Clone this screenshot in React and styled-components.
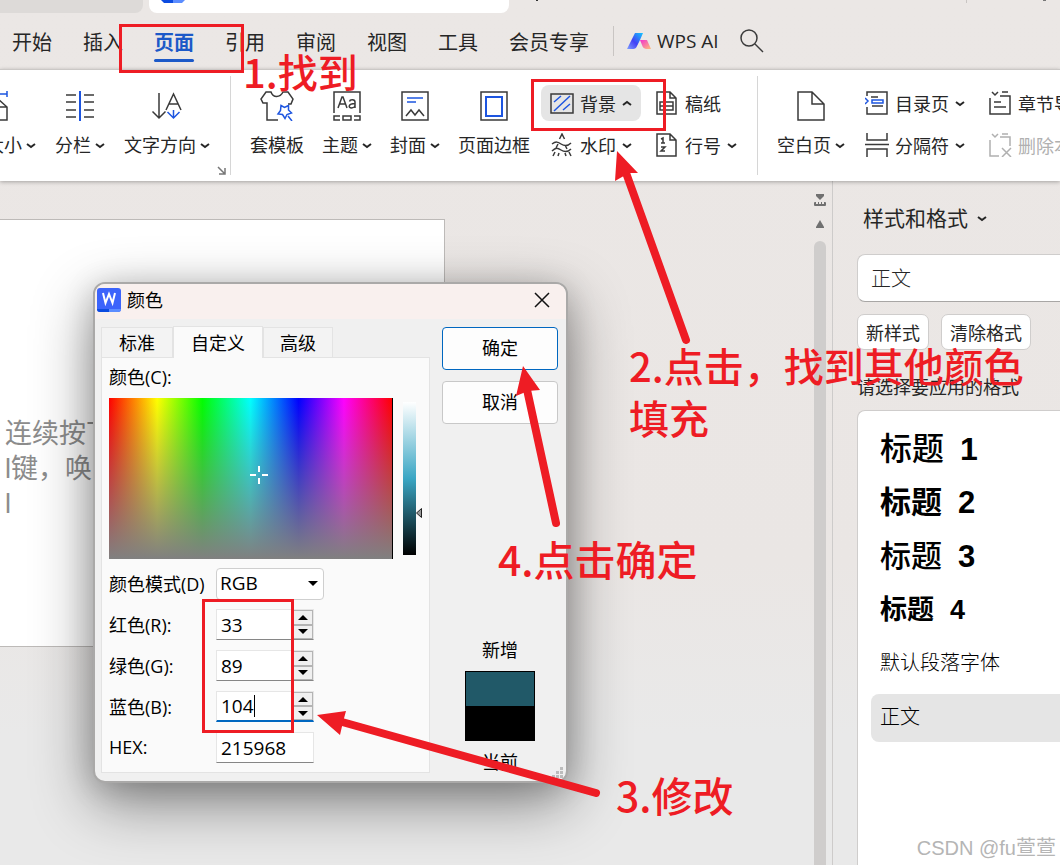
import React, { useState } from "react";
import styled, { createGlobalStyle, css } from "styled-components";

const ui = '"Open Sans", "Noto Sans CJK SC", sans-serif';
const red = "#ee1c24";
const ink = "#262626";
const blue = "#1d55e0";

const Global = createGlobalStyle`
  * { box-sizing: border-box; }
  body { margin: 0; font-family: ${ui}; color: ${ink}; }
  button, input, select { font: inherit; color: inherit; margin: 0; }
  h1, h2, p, ul { margin: 0; padding: 0; font-weight: inherit; }
`;

const AppWindow = styled.div`
  position: relative;
  display: flex;
  flex-direction: column;
  min-height: 100vh;
  overflow: hidden;
  background: linear-gradient(180deg, #ebe7e5 0%, #eae6e4 65%, #e9e9e9 85%);
`;

/* window tabs */
const TabStrip = styled.div`
  display: flex;
  gap: 6px;
  height: 13px;
  > svg { margin-left: 20px; }
  > svg:last-child { margin-left: auto; }
`;
const WindowTab = styled.div`
  width: ${(p) => p.$width}px;
  padding-left: 12px;
  background: ${(p) => (p.$active ? "#fff" : "#dddad8")};
  border-radius: ${(p) => (p.$active ? "0 0 8px 8px" : "0 0 8px 0")};
  svg { display: block; }
`;

/* menu bar */
const MenuBar = styled.nav`
  display: flex;
  align-items: center;
  height: 56px;
  padding-left: 12px;
  font-size: 20px;
  white-space: nowrap;
`;
const MenuItem = styled.button`
  position: relative;
  height: 56px;
  padding: 3px 0 0;
  margin-right: 31px;
  border: 0;
  background: none;
  line-height: 53px;
  ${(p) => p.$active && css`
    color: #1c59c8;
    font-weight: 700;
    &::after {
      content: "";
      position: absolute;
      left: 0;
      right: 0;
      bottom: 7px;
      height: 3px;
      border-radius: 2px;
      background: #1c59c8;
    }
  `}
  &:last-child { margin-right: 24px; }
`;
const MenuGroup = styled.div`
  display: flex;
`;
const MenuRule = styled.div`
  width: 1px;
  height: 30px;
  background: #c9c5c3;
`;
const AiButton = styled.button`
  display: flex;
  align-items: center;
  gap: 6px;
  padding: 0;
  margin: 0 21px 0 13px;
  border: 0;
  background: none;
  font-size: 19px;
`;
const IconButton = styled.button`
  display: flex;
  padding: 0;
  border: 0;
  background: none;
`;

/* ribbon */
const Ribbon = styled.div`
  position: relative;
  z-index: 1;
  display: flex;
  height: 112px;
  background: #fff;
  border-top: 1px solid #cbc8c6;
  box-shadow: 0 1px 4px rgba(0, 0, 0, 0.3);
  font-size: 18px;
  white-space: nowrap;
`;
const RibbonGroup = styled.div`
  position: relative;
  display: flex;
  flex: none;
  gap: 18px;
  padding: 0 19px;
  ${(p) => p.$first && css`
    width: 230px;
    padding: 0 20px 0 0;
    gap: 19px;
    justify-content: flex-end;
  `}
  ${(p) => p.$wide && css`
    padding-right: 11px;
  `}
`;
const GroupRule = styled.div`
  flex: none;
  width: 1px;
  height: 99px;
  margin-top: 6px;
  background: #d6d6d6;
`;
const BigButton = styled.button`
  display: flex;
  flex: none;
  flex-direction: column;
  align-items: center;
  gap: 12px;
  padding: 21px 0 0;
  border: 0;
  background: none;
`;
const BigLabel = styled.span`
  display: flex;
  align-items: center;
  gap: 4px;
  line-height: 24px;
`;
const SmallColumns = styled.div`
  display: flex;
  gap: 5px;
  margin-left: -7px;
`;
const SmallColumn = styled.div`
  display: flex;
  flex-direction: column;
  align-items: flex-start;
  gap: 6px;
  padding-top: 15px;
`;
const SmallButton = styled.button`
  display: flex;
  align-items: center;
  gap: 6px;
  height: 36px;
  padding: 0 9px;
  border: 0;
  border-radius: 8px;
  background: ${(p) => (p.$active ? "#e5e5e5" : "none")};
  color: ${(p) => (p.disabled ? "#b0b0b0" : "inherit")};
`;
const Launcher = styled.button`
  position: absolute;
  right: 4px;
  bottom: 6px;
  display: flex;
  padding: 0;
  border: 0;
  background: none;
`;

/* work area */
const Workspace = styled.main`
  display: flex;
  flex: 1;
`;
const Canvas = styled.section`
  flex: 1;
  min-width: 0;
  padding-top: 38px;
`;
const Paper = styled.article`
  width: 445px;
  height: 428px;
  padding: 197px 0 0 5px;
  background: #fff;
  border: 1px solid #bdbab8;
  border-left: 0;
  color: #8c8c8c;
  font-family: "Liberation Sans", "Noto Sans CJK SC", sans-serif;
  font-size: 27px;
  line-height: 35px;
`;
const ScrollColumn = styled.div`
  display: flex;
  flex-direction: column;
  align-items: center;
  gap: 13px;
  width: 24px;
  padding-top: 13px;
`;
const ScrollThumb = styled.div`
  flex: 1;
  width: 12px;
  border-radius: 6px 6px 0 0;
  background: #cfcdcc;
`;
const SidePanel = styled.aside`
  display: flex;
  flex-direction: column;
  width: 228px;
  padding: 22px 0 0 24px;
  border-left: 1px solid #cdcbca;
  white-space: nowrap;
`;
const PanelTitle = styled.h2`
  display: flex;
  align-items: center;
  gap: 9px;
  padding-left: 6px;
  font-size: 21px;
  line-height: 30px;
`;
const StyleInput = styled.input`
  width: 100%;
  height: 48px;
  margin: 21px 0 12px;
  padding: 0 13px 2px;
  border: 1px solid #cfcdcc;
  border-right: 0;
  border-bottom-color: #a8a6a5;
  border-radius: 8px 0 0 8px;
  background: #fff;
  font-size: 20px;
  font-weight: 300;
`;
const StyleActions = styled.div`
  display: flex;
  gap: 12px;
`;
const StyleAction = styled.button`
  height: 36px;
  padding: 0 8px;
  border: 1px solid #cfcdcc;
  border-radius: 7px;
  background: #fff;
  font-size: 18px;
`;
const Hint = styled.p`
  margin: 25px 0 10px;
  font-size: 18px;
  line-height: 25px;
`;
const StyleList = styled.ul`
  display: flex;
  flex: 1;
  flex-direction: column;
  gap: 6px;
  padding: 13px 0 0 13px;
  border: 1px solid #cfcdcc;
  border-width: 1px 0 0 1px;
  border-radius: 8px 0 0 0;
  background: #fff;
  color: #000;
  list-style: none;
`;
const StyleRow = styled.li`
  height: 48px;
  padding-left: 9px;
  border-radius: 8px 0 0 8px;
  background: ${(p) => (p.$selected ? "#e5e5e5" : "none")};
  font-family: "Noto Sans CJK SC", sans-serif;
  font-size: ${(p) => p.$size}px;
  font-weight: ${(p) => p.$weight};
  line-height: 44px;
  b {
    margin-left: 16px;
    font-family: "Liberation Sans", sans-serif;
    font-weight: 700;
    line-height: 1;
  }
`;

/* colour dialog */
const Dialog = styled.section`
  position: absolute;
  z-index: 2;
  left: 93px;
  top: 282px;
  width: 475px;
  height: 501px;
  border: 2px solid #aaa9a8;
  border-radius: 12px;
  background: #f0f0f0;
  box-shadow: 0 20px 60px rgba(0, 0, 0, 0.44), 0 4px 30px rgba(0, 0, 0, 0.16);
  color: #000;
  font-size: 18px;
`;
const DialogTitle = styled.header`
  display: flex;
  align-items: center;
  gap: 6px;
  height: 35px;
  padding: 0 16px 3px 2px;
  border-radius: 10px 10px 0 0;
  background: #f9f0ee;
  h1 { flex: 1; font-size: 18px; line-height: 24px; }
`;
const DialogBody = styled.div`
  display: flex;
  justify-content: space-between;
  padding: 7px 8px 0 6px;
`;
const Tabs = styled.div`
  display: flex;
  align-items: flex-end;
  height: 32px;
`;
const Tab = styled.button`
  position: relative;
  z-index: ${(p) => (p.$active ? 1 : 0)};
  width: ${(p) => p.$width}px;
  height: ${(p) => (p.$active ? 32 : 31)}px;
  padding: 0 0 2px;
  border: 1px solid #e3e3e3;
  border-bottom: ${(p) => (p.$active ? "0" : "1px solid #e3e3e3")};
  background: ${(p) => (p.$active ? "#fafafa" : "#f3f3f3")};
`;
const TabPanel = styled.div`
  width: 329px;
  height: 416px;
  margin-top: -1px;
  padding: 7px 7px 0;
  border: 1px solid #e3e3e3;
  background: #fafafa;
`;
const Caption = styled.div`
  line-height: 24px;
`;
const Picker = styled.div`
  display: flex;
  gap: 10px;
  height: 161px;
  margin-top: 9px;
`;
const Spectrum = styled.div`
  position: relative;
  width: 284px;
  border-right: 1px solid #000;
  background:
    linear-gradient(180deg, rgba(128, 128, 128, 0), #808080),
    linear-gradient(90deg, #f00, #ff0 17%, #0f0 33%, #0ff 50%, #00f 67%, #f0f 83%, #f00);
  svg { position: absolute; left: 141px; top: 68px; }
`;
const Luminance = styled.div`
  position: relative;
  width: 13px;
  height: 153px;
  margin-top: 4px;
  background: linear-gradient(180deg, #fff, #3aa6c4 50%, #000);
  input {
    position: absolute;
    inset: 0;
    width: 13px;
    height: 153px;
    writing-mode: vertical-lr;
    opacity: 0;
  }
  svg { position: absolute; left: 13px; top: 106px; }
`;
const Fields = styled.div`
  display: flex;
  flex-direction: column;
  gap: 10px;
  margin-top: 9px;
`;
const Field = styled.div`
  display: flex;
  align-items: center;
  height: 31px;
  label { width: 107px; padding-bottom: 2px; white-space: nowrap; }
`;
const SelectBox = styled.div`
  position: relative;
  svg { position: absolute; right: 6px; top: 13px; pointer-events: none; }
`;
const Select = styled.select`
  display: block;
  width: 108px;
  height: 32px;
  padding: 0 3px 1px;
  border: 1px solid #cfcfcf;
  border-radius: 4px;
  background: #fff;
  font-size: 19px;
  appearance: none;
`;
const ValueBox = styled.div`
  position: relative;
  display: flex;
  width: 98px;
  height: 31px;
  background: #fff;
  border: 1px solid #e6e6e6;
  border-bottom: ${(p) => (p.$focus ? "2px solid #0067c0" : "1px solid #868686")};
  input {
    flex: 1;
    min-width: 0;
    padding: 0 4px;
    border: 0;
    background: none;
    outline: none;
    font-size: 19px;
  }
`;
const Caret = styled.span`
  position: absolute;
  left: 37px;
  top: 3px;
  width: 1px;
  height: 22px;
  background: #000;
`;
const Spinner = styled.div`
  display: flex;
  flex-direction: column;
  width: 20px;
`;
const SpinButton = styled.button`
  display: flex;
  flex: 1;
  align-items: center;
  justify-content: center;
  padding: 0;
  border: 1px solid #b4b4b4;
  background: #f0f0f0;
`;
const DialogSide = styled.div`
  display: flex;
  flex-direction: column;
  align-items: center;
  width: 116px;
  padding-top: 1px;
`;
const DialogButton = styled.button`
  width: 116px;
  height: 43px;
  margin-bottom: 11px;
  padding: 0 0 3px;
  border: 1px solid ${(p) => (p.$primary ? "#0067c0" : "#c8c8c8")};
  border-radius: 4px;
  background: #fdfdfd;
`;
const Preview = styled.div`
  display: flex;
  flex-direction: column;
  align-items: center;
  gap: 9px;
  margin-top: 203px;
  line-height: 24px;
`;
const Swatch = styled.div`
  width: 70px;
  height: 70px;
  border: 1px solid #000;
  background: linear-gradient(#215968 50%, #000 50%);
`;
const Grip = styled.svg`
  position: absolute;
  right: 2px;
  bottom: 2px;
`;

/* tutorial marks drawn over the window */
const Marks = styled.div`
  position: absolute;
  z-index: 3;
  inset: 0;
  overflow: hidden;
  pointer-events: none;
  svg { position: absolute; left: 0; top: 0; }
`;
const Frame = styled.div`
  position: absolute;
  left: ${(p) => p.$x}px;
  top: ${(p) => p.$y}px;
  width: ${(p) => p.$w}px;
  height: ${(p) => p.$h}px;
  border: 3px solid ${red};
`;
const Note = styled.p`
  position: absolute;
  left: ${(p) => p.$x}px;
  top: ${(p) => p.$y}px;
  color: ${red};
  font-family: "Noto Sans CJK SC", sans-serif;
  font-size: ${(p) => p.$size || 41}px;
  font-weight: 500;
  line-height: 52px;
  white-space: nowrap;
`;
const Watermark = styled.p`
  position: absolute;
  right: 4px;
  bottom: 3px;
  color: #b5b5b5;
  font-family: "Liberation Sans", "Noto Sans CJK SC", sans-serif;
  font-size: 20px;
  line-height: 28px;
  text-shadow: 1px 1px 0 #fff;
`;

const Chevron = ({ up }) => (
  <svg width="10" height="10" viewBox="0 0 10 10" fill="none" stroke="#262626" strokeWidth="2">
    <path d={up ? "M1 7 5 4 9 7" : "M1 4 5 7 9 4"} />
  </svg>
);
const Triangle = ({ up }) => (
  <svg width="10" height="5" viewBox="0 0 10 5"><path d={up ? "M0 5 5 0l5 5z" : "M0 0h10L5 5z"} /></svg>
);
const Glyph = ({ w = 30, h = 30, dim, children }) => (
  <svg width={w} height={h} viewBox={`0 0 ${w} ${h}`} fill="none" stroke={dim ? "#b0b0b0" : "#3a3a3a"} strokeWidth="1.500">
    {children}
  </svg>
);

const icons = {
  size: (
    <Glyph><path d="M3 29V8h17l9 8v13z M20 8v8h9" /><path stroke={blue} d="M3 3h26M3 0v6M29 0v6" /></Glyph>
  ),
  columns: (
    <Glyph><path d="M1 4h10M1 11h10M1 19h10M1 26h10M19 4h10M19 11h10M19 19h10M19 26h10" /><path stroke={blue} strokeWidth="2" d="M15 0v30" /></Glyph>
  ),
  direction: (
    <Glyph w={32}><path d="M8 2v25M1.500 20.500 8 27l6.500-6.500M15 19 22.500 3 30 19M18 13h9" /><path stroke={blue} d="M22.500 19v8M16.500 21l6 6 6-6" /></Glyph>
  ),
  shirt: (
    <Glyph w={34}><path d="M18 29H7V12H3L1 8l5-7h5c2 6 9 6 12 0h5l5 7-2 5h-3" /><path stroke={blue} d="m21 14.500 3.500 2 4-2 0 4.500 3 3-4.500 1.500-2 4-2.500-4-4.500-.5 2.500-3.500zM28 25l4 5" /></Glyph>
  ),
  theme: (
    <Glyph><path d="M2 22V1h26v21M8 25H2v4h6M11 25h8v4h-8zM22 25h6v4h-6" /><path d="M6 17 10 6h1l4 11M7.500 13h6M23 17v-6c0-3-5-3-5.500-.5M23 12.500c-7 0-7 4.500-3.500 4.500 2 0 3.500-1.500 3.500-3" /></Glyph>
  ),
  cover: (
    <Glyph><path d="M2 1h26v28H2zM6 25l5-6 4 5 4-5 5 6" /><path stroke={blue} d="M7 7h16M7 11h9" /></Glyph>
  ),
  border: (
    <Glyph><path d="M2 1h26v28H2z" /><path stroke={blue} strokeWidth="2" d="M7 6h16v19H7z" /></Glyph>
  ),
  background: (
    <Glyph w={24} h={24}><path d="M1 3h22v19H1z" /><path stroke={blue} d="M4 11l7-6M4 20 20 5M13 19l7-6" /></Glyph>
  ),
  watermark: (
    <Glyph w={24} h={24}><path d="M9.500 6 12 1l2.500 5M2 11c4-3 6-2 9 0s7 2 10-1M2 18c4-4 6-3 9-1s7 2 10-1M8 11l-2 4M15 12l2 4M5 19l-2 4M9 20l-1 3M15 20l1 3M19 19l2 4" /></Glyph>
  ),
  draft: (
    <Glyph w={24} h={24}><path d="M2 1h13l6 6v16H2zM15 1v6h6M5 11h13v8H5zM5 15h13" /></Glyph>
  ),
  lines: (
    <Glyph w={24} h={24}><path d="M2 1h13l6 6v16H2zM15 1v6h6M6 6l2-1v5M6 10h4M6 14h4l-4 4h4" /></Glyph>
  ),
  blank: (
    <Glyph><path d="M2 1h14l12 12v16H2zM16 1v12h12" /></Glyph>
  ),
  contents: (
    <Glyph w={24} h={24}><path d="M2 5V1h20v22H2v-7M6 6h7M7 15h11" /><path stroke={blue} d="m0 7 3 3-3 3M7 9h11v3H7z" /></Glyph>
  ),
  breaks: (
    <Glyph w={24} h={24}><path d="M2 0v7h20V0M0 11.500h24M2 24v-8h20v8" /></Glyph>
  ),
  chapter: (
    <Glyph w={24} h={24}><path d="M2 7v16h20V5H12M4 1l3 3 3-3M14 1h6M6 11h7M6 16h12" /></Glyph>
  ),
  remove: (
    <Glyph w={24} h={24} dim><path d="M2 7v16h9M12 4h10v9M4 1l3 3 3-3M14 1h6M14 15l9 9M23 15l-9 9" /></Glyph>
  ),
};

function Big({ icon, label, menu }) {
  return (
    <BigButton type="button">
      {icons[icon]}
      <BigLabel>{label}{menu && <Chevron />}</BigLabel>
    </BigButton>
  );
}
function Small({ icon, label, menu, up, active, disabled }) {
  return (
    <SmallButton type="button" $active={active} disabled={disabled}>
      {icons[icon]}
      <span>{label}</span>
      {menu && <Chevron up={up} />}
    </SmallButton>
  );
}

const menus = ["开始", "插入", "页面", "引用", "审阅", "视图", "工具", "会员专享"];
const styles = [
  { name: "标题", n: 1, size: 32, weight: 500 },
  { name: "标题", n: 2, size: 31, weight: 700 },
  { name: "标题", n: 3, size: 31, weight: 500 },
  { name: "标题", n: 4, size: 27, weight: 700 },
  { name: "默认段落字体", size: 20, weight: 300 },
  { name: "正文", size: 20, weight: 300, selected: true },
];
const channels = [
  { key: "r", label: "红色(R):" },
  { key: "g", label: "绿色(G):" },
  { key: "b", label: "蓝色(B):", focus: true },
];

function ColorDialog() {
  const [rgb, setRgb] = useState({ r: 33, g: 89, b: 104 });
  const step = (key, by) => setRgb({ ...rgb, [key]: Math.min(255, Math.max(0, Number(rgb[key]) + by)) });
  return (
    <Dialog role="dialog" aria-label="颜色">
      <DialogTitle>
        <svg width="24" height="24" viewBox="0 0 24 24">
          <rect width="24" height="24" rx="3" fill="#3c64fb" />
          <path d="M0 21h12v3H3q-3 0-3-3z" fill="#0c4be0" /><path d="M12 21h12q0 3-3 3h-9z" fill="#5c8dff" />
          <path d="M6 5 8.500 15 12 6l3.500 9L18 5" fill="none" stroke="#fff" strokeWidth="2" />
        </svg>
        <h1>颜色</h1>
        <IconButton type="button" aria-label="关闭">
          <svg width="16" height="16" viewBox="0 0 16 16" stroke="#111" strokeWidth="1.500"><path d="m1 1 14 14M15 1 1 15" /></svg>
        </IconButton>
      </DialogTitle>
      <DialogBody>
        <div>
          <Tabs>
            <Tab type="button" $width={72}>标准</Tab>
            <Tab type="button" $width={90} $active>自定义</Tab>
            <Tab type="button" $width={70}>高级</Tab>
          </Tabs>
          <TabPanel>
            <Caption>颜色(C):</Caption>
            <Picker>
              <Spectrum>
                <svg width="18" height="18" viewBox="0 0 18 18" stroke="#fff" strokeWidth="2"><path d="M9 0v6M9 12v6M0 9h6M12 9h6" /></svg>
              </Spectrum>
              <Luminance>
                <input type="range" aria-label="亮度" defaultValue="27" />
                <svg width="6" height="10" viewBox="0 0 6 10"><path d="M5.500 .5v9L.5 5z" fill="#999" stroke="#222" /></svg>
              </Luminance>
            </Picker>
            <Fields>
              <Field>
                <label htmlFor="mode">颜色模式(D)</label>
                <SelectBox>
                  <Select id="mode" defaultValue="RGB"><option>RGB</option><option>HSL</option></Select>
                  <Triangle />
                </SelectBox>
              </Field>
              {channels.map((c) => (
                <Field key={c.key}>
                  <label htmlFor={c.key}>{c.label}</label>
                  <ValueBox $focus={c.focus}>
                    <input id={c.key} value={rgb[c.key]} onChange={(e) => setRgb({ ...rgb, [c.key]: e.target.value })} />
                    {c.focus && <Caret />}
                    <Spinner>
                      <SpinButton type="button" aria-label="增加" onClick={() => step(c.key, 1)}><Triangle up /></SpinButton>
                      <SpinButton type="button" aria-label="减少" onClick={() => step(c.key, -1)}><Triangle /></SpinButton>
                    </Spinner>
                  </ValueBox>
                </Field>
              ))}
              <Field>
                <label htmlFor="hex">HEX:</label>
                <ValueBox><input id="hex" defaultValue="215968" /></ValueBox>
              </Field>
            </Fields>
          </TabPanel>
        </div>
        <DialogSide>
          <DialogButton type="button" $primary>确定</DialogButton>
          <DialogButton type="button">取消</DialogButton>
          <Preview>
            <span>新增</span>
            <Swatch />
            <span>当前</span>
          </Preview>
        </DialogSide>
      </DialogBody>
      <Grip width="12" height="12" viewBox="0 0 12 12" fill="#bcbcbc">
        <path d="M8 0h3v3H8zM8 4h3v3H8zM4 4h3v3H4zM8 8h3v3H8zM4 8h3v3H4zM0 8h3v3H0z" />
      </Grip>
    </Dialog>
  );
}

export default function App() {
  return (
    <AppWindow>
      <Global />
      <TabStrip>
        <WindowTab $width={143} />
        <WindowTab $width={360} $active>
          <svg width="24" height="3"><path d="M0 0h12v3H3z" fill="#0c4be0" /><path d="M12 0h12l-3 3h-9z" fill="#5c8dff" /></svg>
        </WindowTab>
        <svg width="4" height="3"><path d="M1 0h2v1H1z" fill="#333" /></svg>
        <svg width="94" height="3"><path d="M0 0h1v3H0z" fill="#c9c5c3" /><path d="M77 0h3v1h-3z" fill="#777" /></svg>
      </TabStrip>
      <MenuBar>
        <MenuGroup>
          {menus.map((m) => <MenuItem type="button" key={m} $active={m === "页面"}>{m}</MenuItem>)}
        </MenuGroup>
        <MenuRule />
        <AiButton type="button">
          <svg width="24" height="18" viewBox="0 0 24 18">
            <defs>
              <linearGradient id="aiBlue" x1="0" y1="1" x2="1" y2="0"><stop offset="0" stopColor="#7fa0ff" /><stop offset=".45" stopColor="#4340f5" /><stop offset="1" stopColor="#12c8ff" /></linearGradient>
              <linearGradient id="aiPink" x1="0" y1="0" x2="1" y2="1"><stop offset="0" stopColor="#f22fd0" /><stop offset="1" stopColor="#ffc07a" /></linearGradient>
            </defs>
            <path d="M8 1h8l-3 7-3 6q-1 3-4 3H0z" fill="url(#aiBlue)" />
            <path d="M13 8h7l4 9h-4q-4 0-5-4z" fill="url(#aiPink)" />
          </svg>
          WPS AI
        </AiButton>
        <IconButton type="button" aria-label="搜索">
          <svg width="24" height="24" viewBox="0 0 24 24" fill="none" stroke="#3a3a3a" strokeWidth="1.500"><circle cx="9" cy="9" r="8" /><path d="m15 15 8 8" /></svg>
        </IconButton>
      </MenuBar>
      <Ribbon>
        <RibbonGroup $first>
          <Big icon="size" label="纸张大小" menu />
          <Big icon="columns" label="分栏" menu />
          <Big icon="direction" label="文字方向" menu />
          <Launcher type="button" aria-label="页面设置">
            <svg width="9" height="9" viewBox="0 0 9 9" fill="none" stroke="#777" strokeWidth="1.500"><path d="m1 1 7 7M8 2v6H2" /></svg>
          </Launcher>
        </RibbonGroup>
        <GroupRule />
        <RibbonGroup $wide>
          <Big icon="shirt" label="套模板" />
          <Big icon="theme" label="主题" menu />
          <Big icon="cover" label="封面" menu />
          <Big icon="border" label="页面边框" />
          <SmallColumns>
            <SmallColumn>
              <Small icon="background" label="背景" menu up active />
              <Small icon="watermark" label="水印" menu />
            </SmallColumn>
            <SmallColumn>
              <Small icon="draft" label="稿纸" />
              <Small icon="lines" label="行号" menu />
            </SmallColumn>
          </SmallColumns>
        </RibbonGroup>
        <GroupRule />
        <RibbonGroup>
          <Big icon="blank" label="空白页" menu />
          <SmallColumns>
            <SmallColumn>
              <Small icon="contents" label="目录页" menu />
              <Small icon="breaks" label="分隔符" menu />
            </SmallColumn>
            <SmallColumn>
              <Small icon="chapter" label="章节导航" />
              <Small icon="remove" label="删除本节" disabled />
            </SmallColumn>
          </SmallColumns>
        </RibbonGroup>
      </Ribbon>
      <Workspace>
        <Canvas>
          <Paper>
            <p>连续按下</p>
            <p>l键，唤</p>
            <p>l</p>
          </Paper>
        </Canvas>
        <ScrollColumn>
          <svg width="12" height="13" viewBox="0 0 12 13" fill="#707070"><path d="M2 0h8v2L6 6 2 2zM0 9q0-1 1-1h1v2h2V8h1v2h2V8h1v2h2V8h1q1 0 1 1v2q0 1-1 1H1q-1 0-1-1z" /></svg>
          <svg width="8" height="8" viewBox="0 0 8 8" fill="#707070"><path d="m4 0 4 7v1H0V7z" /></svg>
          <ScrollThumb />
        </ScrollColumn>
        <SidePanel>
          <PanelTitle>样式和格式<Chevron /></PanelTitle>
          <StyleInput aria-label="当前样式" defaultValue="正文" />
          <StyleActions>
            <StyleAction type="button">新样式</StyleAction>
            <StyleAction type="button">清除格式</StyleAction>
          </StyleActions>
          <Hint>请选择要应用的格式</Hint>
          <StyleList>
            {styles.map((s, i) => (
              <StyleRow key={i} $size={s.size} $weight={s.weight} $selected={s.selected}>
                {s.name}
                {s.n && <b>{s.n}</b>}
              </StyleRow>
            ))}
          </StyleList>
        </SidePanel>
      </Workspace>
      <ColorDialog />
      <Marks>
        <Frame $x={119} $y={24} $w={125} $h={49} />
        <Frame $x={531} $y={79} $w={135} $h={52} />
        <Frame $x={202} $y={599} $w={92} $h={134} />
        <svg width="1060" height="865" viewBox="0 0 1060 865" fill={red} stroke={red}>
          <path strokeWidth="8" strokeLinecap="round" d="M625 170 686 340M526 385l30 138M335 720l261 73" />
          <path stroke="none" d="m617 151 21 22-9 0-14 8zM523 366l17 24-12 1-12 5zM317 715l29-4-3 11-3 13z" />
        </svg>
        <Note $x={243} $y={45} $size={40}>1.找到</Note>
        <Note $x={629} $y={339} $size={40}>2.点击，找到其他颜色<br />填充</Note>
        <Note $x={616} $y={768}>3.修改</Note>
        <Note $x={498} $y={532}>4.点击确定</Note>
        <Watermark>CSDN @fu萱萱</Watermark>
      </Marks>
    </AppWindow>
  );
}
